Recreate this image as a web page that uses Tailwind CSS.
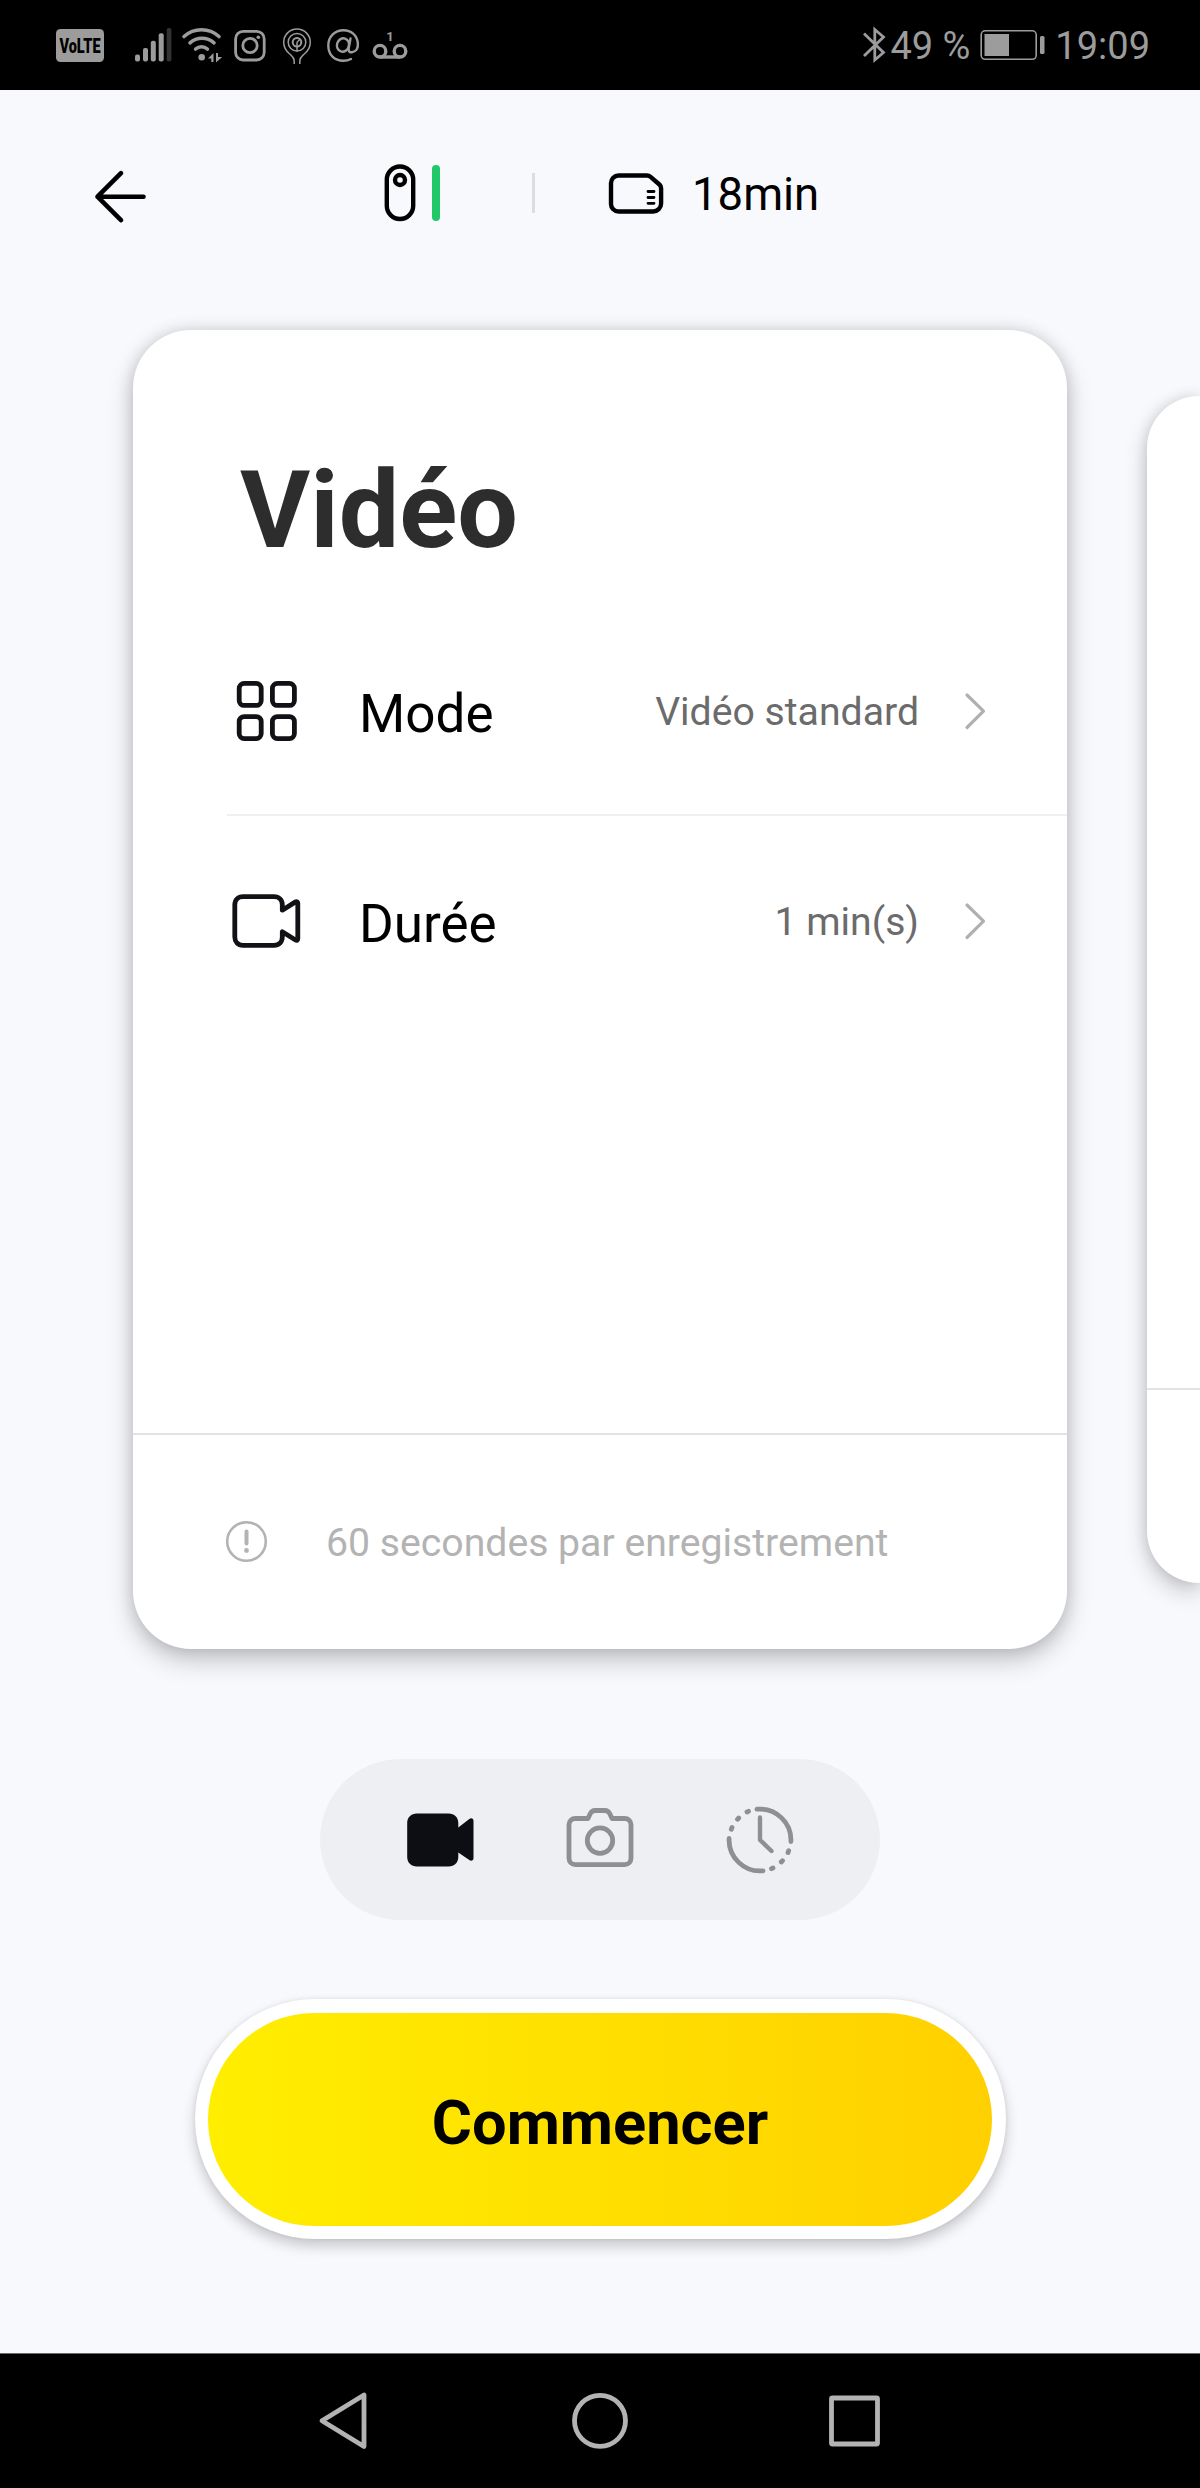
<!DOCTYPE html>
<html lang="fr">
<head>
  <meta charset="UTF-8">
  <meta name="viewport" content="width=device-width, initial-scale=1.0">
  <title>Vidéo</title>
  <script src="https://cdn.jsdelivr.net/npm/@tailwindcss/browser@4"></script>
</head>
<body class="w-[1200px] h-[2488px] overflow-hidden bg-[#f8f9fd] font-[Roboto,sans-serif] text-black">
  <div class="flex flex-col h-full">
    <!-- Status bar -->
    <div class="h-[90px] shrink-0 flex items-center justify-between bg-black pl-14 pr-[50px] text-[#9c9c9c]">
      <div class="flex items-center">
        <svg class="w-12 h-10" viewBox="0 0 48 40" fill="currentColor">
          <rect y="4" width="48" height="33" rx="4.5"/>
          <text x="3.5" y="27.500" font-family="Roboto, sans-serif" font-weight="900" font-size="20" textLength="41" lengthAdjust="spacingAndGlyphs" fill="#000">VoLTE</text>
        </svg>
        <svg class="w-[37px] h-10 ml-[31px]" viewBox="0 0 37 40" fill="currentColor">
          <rect x="0" y="29.5" width="5" height="7" rx="2"/>
          <rect x="8" y="23" width="5" height="13.5" rx="2"/>
          <rect x="15.8" y="15.7" width="5" height="20.8" rx="2"/>
          <rect x="23.7" y="8.3" width="5" height="28.2" rx="2"/>
          <rect x="31.7" y="3" width="4.7" height="33.5" rx="2" fill="#333"/>
        </svg>
        <svg class="w-[42px] h-10 ml-[9px]" viewBox="0 0 42 40" fill="none" stroke="currentColor" stroke-width="3.6" stroke-linecap="round">
          <path d="M3 11.5C13 2.5 28 2.5 38 11.5"/>
          <path d="M9 17.8C16 11.8 26 11.8 33 17.8"/>
          <path d="M14.6 24C18 21 23 21 26.4 24"/>
          <circle cx="20.7" cy="32.3" r="3.3" fill="currentColor" stroke="none"/>
          <path d="M32.5 28v9h-2.200v-3.500h-3.300zM35 28h2v4h4.200L35 37.500z" fill="currentColor" stroke="none"/>
        </svg>
        <svg class="w-[33px] h-10 ml-[10px]" viewBox="0 0 33 40" fill="none" stroke="currentColor" stroke-width="2.8">
          <rect x="2.6" y="6.4" width="28.6" height="28.6" rx="7.5"/>
          <circle cx="17" cy="20.5" r="7.2"/>
          <circle cx="25.3" cy="12.2" r="1.8" fill="currentColor" stroke="none"/>
        </svg>
        <svg class="w-[30px] h-10 ml-4" viewBox="0 0 30 40" fill="none" stroke="currentColor" stroke-width="1.5">
          <path d="M12.2 39v-3c0-4-1.8-4.5-4.5-7C4 26 1.7 22.5 1.7 17.3a13.3 13.3 0 0 1 26.6 0c0 5.2-2.3 8.7-6 11.7-2.7 2.5-4.5 3-4.5 7v3"/>
          <circle cx="15" cy="17.3" r="8.8"/>
          <circle cx="15" cy="17.3" r="4.3" stroke-width="2"/>
          <path d="M15 17.3v9.5M15 17.3l3-3"/>
        </svg>
        <svg class="w-9 h-10 ml-[14px]" viewBox="0 0 36 40" fill="none" stroke="currentColor" stroke-width="2.4" stroke-linecap="round">
          <ellipse cx="17" cy="20" rx="6" ry="6.8" transform="rotate(18 17 20)"/>
          <path d="M24.5 13.5l-1.800 9.500c-.7 4 1.500 4.600 3.600 4.200 4-1 6-4.500 5.500-9.200C31 10 25 5.300 17.500 5.300 8.500 5.300 2.300 12 2.300 20.500c0 9.500 6.200 15.300 15 15.300 3 0 5.300-.5 7.700-1.800"/>
        </svg>
        <svg class="w-9 h-10 ml-[10px]" viewBox="0 0 36 40" fill="none" stroke="currentColor" stroke-width="3.4">
          <circle cx="8" cy="26.2" r="5.8"/>
          <circle cx="28" cy="26.2" r="5.8"/>
          <path d="M8 32h20"/>
          <text x="18" y="15.8" text-anchor="middle" font-size="13" font-weight="700" fill="currentColor" stroke="none">1</text>
        </svg>
      </div>
      <div class="flex items-center text-[38px] leading-none">
        <svg class="w-6 h-10" viewBox="0 0 24 40" fill="none" stroke="currentColor" stroke-width="2.8">
          <path d="M2 8.500l19.500 19-8.700 7.500V4.500l8.700 7.500L2 31"/>
        </svg>
        <span class="ml-1 pt-[2px]">49 %</span>
        <svg class="w-[66px] h-10 ml-[9px]" viewBox="0 0 66 40" fill="currentColor">
          <rect x="2.2" y="5.8" width="55" height="28.5" rx="4" fill="none" stroke="currentColor" stroke-width="1.6"/>
          <rect x="5.5" y="9" width="24.5" height="22"/>
          <rect x="61" y="11" width="4.5" height="18" rx="1.5"/>
        </svg>
        <span class="ml-[10px] pt-[2px]">19:09</span>
      </div>
    </div>

    <!-- Top bar -->
    <header class="h-[210px] shrink-0 flex items-start pt-[72px] pl-[92px]">
      <svg class="w-14 h-[62px]" viewBox="0 0 56 62" fill="none" stroke="#000" stroke-width="4.6" stroke-linecap="round" stroke-linejoin="round">
        <path d="M29 11.2L5.5 34.700 29 58.200M5.500 34.700h46"/>
      </svg>
      <svg class="w-8 h-[62px] ml-[236px]" viewBox="0 0 32 62" fill="none" stroke="#000" stroke-width="4.4">
        <rect x="2.8" y="4.5" width="26.4" height="52.5" rx="13.2"/>
        <circle cx="16" cy="18" r="5"/>
      </svg>
      <div class="w-2 h-[56px] mt-[3px] ml-4 rounded-full bg-[#20c867]"></div>
      <div class="w-[3px] h-10 mt-[11px] ml-[92px] bg-[#dcdde0]"></div>
      <svg class="w-14 h-[62px] ml-[73px]" viewBox="0 0 56 62" fill="none" stroke="#000" stroke-width="4.4" stroke-linejoin="round">
        <path d="M10.500 13.500H39c1.500 0 2.500.4 3.600 1.400l8.800 7.600c1.200 1 1.700 2.200 1.700 3.800v15.200a8 8 0 0 1-8 8H10.500a7.500 7.500 0 0 1-7.500-7.500V21a7.500 7.500 0 0 1 7.500-7.500z"/>
        <path d="M40 29.500h6M40 35.500h6M40 41.300h6" stroke-width="2.8" stroke-linecap="round"/>
      </svg>
      <span class="ml-[28px] pt-[2px] text-[45.5px] leading-[62px]">18min</span>
    </header>

    <!-- Mode cards -->
    <main class="flex items-start shrink-0 h-[1459px] pl-[133px] pt-[30px]">
      <section class="w-[934px] h-[1319px] shrink-0 flex flex-col rounded-[58px] bg-white shadow-[0_11px_26px_rgba(0,0,0,0.22),0_0_16px_rgba(0,0,0,0.13)]">
        <h1 class="pl-[107px] pt-[120px] text-[107.5px] leading-[120px] font-bold text-[#2d2d2d]">Vidéo</h1>
        <div class="mt-[38px] ml-[94px] h-[208px] flex items-center border-b-2 border-[#efefef]">
          <svg class="w-20 h-20" viewBox="0 0 80 80" fill="none" stroke="#111116" stroke-width="4.8">
            <rect x="12.2" y="12.4" width="22" height="22" rx="5"/>
            <rect x="45.4" y="12.4" width="22" height="22" rx="5"/>
            <rect x="12.2" y="45.6" width="22" height="22" rx="5"/>
            <rect x="45.4" y="45.6" width="22" height="22" rx="5"/>
          </svg>
          <span class="ml-[52px] pt-[7px] text-[53px]">Mode</span>
          <span class="ml-auto pt-[3px] text-[39.2px] text-[#6b6b6b]">Vidéo standard</span>
          <svg class="w-7 h-10 ml-[41px] mr-[79px]" viewBox="0 0 28 40" fill="none" stroke="#b0b0b0" stroke-width="3.2" stroke-linecap="round" stroke-linejoin="round"><path d="M7 4l16.500 16.200L7 36.500"/></svg>
        </div>
        <div class="ml-[94px] h-[210px] flex items-center">
          <svg class="w-20 h-20" viewBox="0 0 80 80" fill="none" stroke="#111116" stroke-width="4.8" stroke-linejoin="round">
            <path d="M16 15.600h31c5 0 8.300 3.400 8.300 8.200v5.400l13.200-8.300c1.200-.7 2.300 0 2.300 1.300v35.500c0 1.300-1.100 2-2.300 1.300L55.300 50.700v5.400c0 4.800-3.300 8.200-8.300 8.200H16c-5 0-8.200-3.400-8.200-8.200V23.800c0-4.800 3.200-8.200 8.200-8.200z"/>
          </svg>
          <span class="ml-[52px] pt-[7px] text-[53px]">Durée</span>
          <span class="ml-auto pt-[3px] text-[39.2px] text-[#6b6b6b]">1 min(s)</span>
          <svg class="w-7 h-10 ml-[41px] mr-[79px]" viewBox="0 0 28 40" fill="none" stroke="#b0b0b0" stroke-width="3.2" stroke-linecap="round" stroke-linejoin="round"><path d="M7 4l16.500 16.200L7 36.500"/></svg>
        </div>
        <footer class="mt-auto h-[216px] shrink-0 flex items-center pl-[91px] border-t-2 border-[#e3e3e5] text-[#b3b3b3]">
          <svg class="w-11 h-11" viewBox="0 0 44 44" fill="none" stroke="currentColor" stroke-width="2.6">
            <circle cx="22.5" cy="21.5" r="19.3"/>
            <path d="M22.500 11.500v12" stroke-width="4" stroke-linecap="round"/>
            <circle cx="22.5" cy="30.5" r="2.4" fill="currentColor" stroke="none"/>
          </svg>
          <span class="ml-[58px] pt-[2px] text-[39.2px]">60 secondes par enregistrement</span>
        </footer>
      </section>
      <!-- Next card, cut off by the screen edge -->
      <section class="w-[53px] h-[1187px] mt-[66px] ml-20 shrink-0 flex flex-col justify-end rounded-l-[52px] bg-white shadow-[0_10px_23px_rgba(0,0,0,0.2),0_0_14px_rgba(0,0,0,0.12)]">
        <div class="h-[195px] border-t-2 border-[#e3e3e5]"></div>
      </section>
    </main>

    <!-- Capture type -->
    <nav class="w-[560px] h-[161px] shrink-0 mx-auto rounded-full bg-[#eeeff3] flex items-center justify-center gap-20">
      <svg class="w-20 h-20" viewBox="0 0 80 80" fill="#0d0e13">
        <path d="M17 13.500h31.500c6 0 9.800 4 9.800 9.500v4.500l11-8.500c2-1.500 4.200-.5 4.200 1.700v37.600c0 2.200-2.200 3.200-4.200 1.700l-11-7.500V57c0 5.500-3.800 9.500-9.800 9.500H17c-6 0-9.800-4-9.800-9.500V23c0-5.500 3.800-9.500 9.800-9.500z"/>
      </svg>
      <svg class="w-20 h-20" viewBox="0 0 80 80" fill="none" stroke="#8e8f92" stroke-width="4.8" stroke-linejoin="round">
        <path d="M15.500 18.500H28l2.200-4.700c1-2.200 2.500-3.300 5-3.300h9.600c2.500 0 4 1.100 5 3.300l2.200 4.700h12.500c3.800 0 6.500 2.500 6.500 6.300v33.500c0 3.800-2.700 6.300-6.500 6.300h-49c-3.800 0-6.500-2.500-6.500-6.300V24.800c0-3.800 2.700-6.300 6.500-6.300z"/>
        <circle cx="40" cy="40.6" r="12.7"/>
      </svg>
      <svg class="w-20 h-20" viewBox="0 0 80 80" fill="none" stroke="#8e8f92" stroke-width="4.8" stroke-linecap="round" stroke-linejoin="round">
        <path d="M37 9.200A31 31 0 0 1 70.900 41.500M43 70.800A31 31 0 0 1 9.100 38.500"/>
        <path d="M11.300 29.300l.7-1.900M17.500 19.300l1.200-1.300M27 12l1.500-.7M68.700 50.700l-.7 1.900M62.500 60.700l-1.200 1.300M53 68l-1.500.7"/>
        <path d="M40 17.500V40l11.500 11" stroke-width="4.4"/>
      </svg>
    </nav>

    <!-- Start button -->
    <button class="w-[811px] h-[240px] shrink-0 mx-auto mt-[79px] p-[13.5px] rounded-full bg-white shadow-[0_7px_14px_rgba(0,0,0,0.2),0_0_4px_rgba(0,0,0,0.08)]">
      <span class="flex h-full items-center justify-center pt-2 rounded-full bg-linear-to-r/srgb from-[#ffee00] to-[#ffd000] text-[61.4px] font-bold">Commencer</span>
    </button>

    <!-- Android navigation -->
    <div class="mt-auto h-[135px] shrink-0 flex items-center justify-center gap-[175px] bg-black border-t border-[#6b6b6e]">
      <svg class="w-20 h-20" viewBox="0 0 80 80" fill="none" stroke="#b3b3b3" stroke-width="4.8" stroke-linejoin="round"><path d="M59 14v51.500L17 39.800z"/></svg>
      <svg class="w-20 h-20" viewBox="0 0 80 80" fill="none" stroke="#b3b3b3" stroke-width="4.8"><circle cx="40" cy="39.8" r="25.500"/></svg>
      <svg class="w-20 h-20" viewBox="0 0 80 80" fill="none" stroke="#b3b3b3" stroke-width="4.8" stroke-linejoin="round"><rect x="16.5" y="17" width="46" height="46" rx="1"/></svg>
    </div>
  </div>
</body>
</html>
